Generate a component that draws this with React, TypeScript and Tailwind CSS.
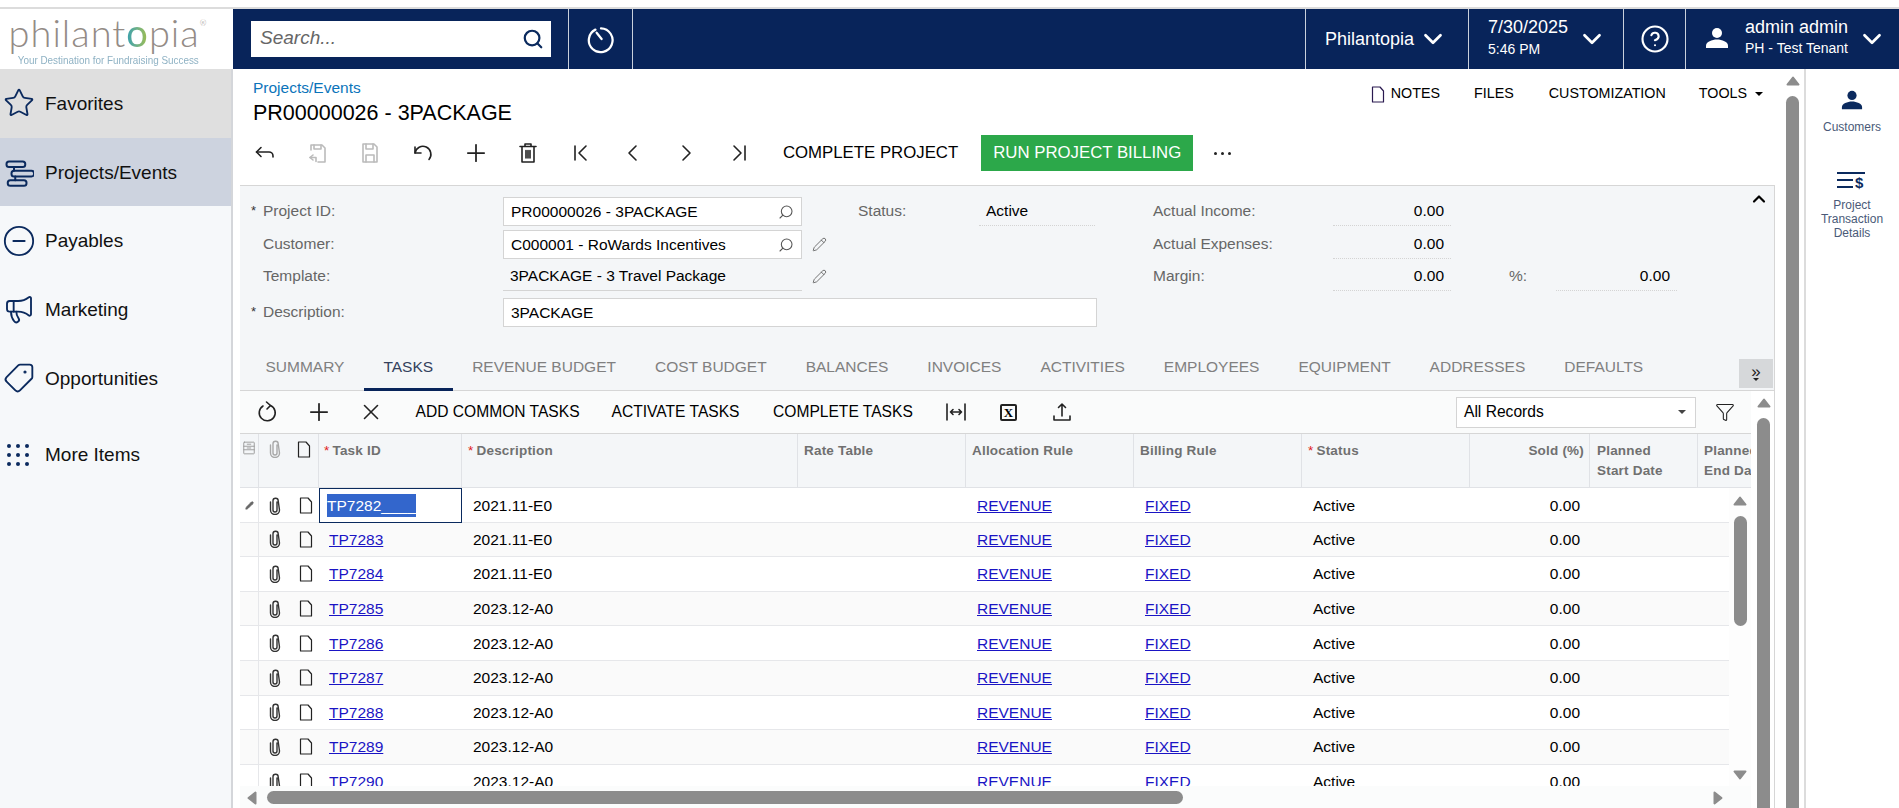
import React from 'react';
import { ChevronDown, ChevronUp, CircleHelp, CircleMinus, Funnel, Megaphone, Pencil, Plus, Search, Star, Tag, X } from 'lucide-react';

const columns = 'grid grid-cols-[19px_30px_30px_143px_336px_168px_168px_168px_168px_120px_108px_100px]';

const tasks = [
  ['TP7282', '2021.11-E0'],
  ['TP7283', '2021.11-E0'],
  ['TP7284', '2021.11-E0'],
  ['TP7285', '2023.12-A0'],
  ['TP7286', '2023.12-A0'],
  ['TP7287', '2023.12-A0'],
  ['TP7288', '2023.12-A0'],
  ['TP7289', '2023.12-A0'],
  ['TP7290', '2023.12-A0'],
];

const tabs = ['SUMMARY', 'TASKS', 'REVENUE BUDGET', 'COST BUDGET', 'BALANCES', 'INVOICES', 'ACTIVITIES', 'EMPLOYEES', 'EQUIPMENT', 'ADDRESSES', 'DEFAULTS'];

function Svg({ size = 24, className = '', children }: { size?: number; className?: string; children: React.ReactNode }) {
  return (
    <svg width={size} height={size} viewBox="0 0 24 24" fill="none" stroke="currentColor" strokeWidth="1.6" strokeLinecap="round" strokeLinejoin="round" className={className}>
      {children}
    </svg>
  );
}

function Triangle({ className = '' }: { className?: string }) {
  return (
    <svg width="14" height="10" viewBox="0 0 14 10" className={className}>
      <path d="M7 1.5 12.5 8.5H1.5Z" fill="#8c8c8c" stroke="#8c8c8c" strokeWidth="2" strokeLinejoin="round" />
    </svg>
  );
}

function Clip({ className = '' }: { className?: string }) {
  return (
    <svg width="12" height="18" viewBox="0 0 12 18" fill="none" stroke="currentColor" strokeWidth="1.4" strokeLinecap="round" className={className}>
      <path d="M8 5v8a2 2 0 0 1-4 0V4a2.6 2.6 0 0 1 5.2-.2L10.500 13a4.500 4.500 0 0 1-9 0V5" />
    </svg>
  );
}

function Doc({ className = '' }: { className?: string }) {
  return (
    <svg width="14" height="17" viewBox="0 0 14 17" fill="none" stroke="currentColor" strokeWidth="1.2" strokeLinejoin="round" className={className}>
      <path d="M1.500 1h7.500l3.500 4v11h-11Z" />
    </svg>
  );
}

function User({ size = 26, className = '' }: { size?: number; className?: string }) {
  return (
    <svg width={size} height={size} viewBox="0 0 24 24" fill="currentColor" className={className}>
      <circle cx="12" cy="7" r="5" />
      <path d="M1 22v-2.500c0-3.500 6-6 11-6s11 2.500 11 6V22Z" />
    </svg>
  );
}

function Field({ label, required, children }: { label: string; required?: boolean; children: React.ReactNode }) {
  return (
    <>
      <div className="flex w-[263px] items-center pb-[2px] pl-[11px] text-[15.5px] text-[#666]">
        <span className="w-[12px] text-[13px] text-[#333]">{required ? '*' : ''}</span>
        {label}
      </div>
      {children}
    </>
  );
}

function Lookup({ value, pencil }: { value: string; pencil?: boolean }) {
  return (
    <div className="flex w-[355px] items-center">
      <div className="flex h-[29px] w-[299px] items-center justify-between border border-[#d4d4d4] bg-white pr-[7px] pl-[7px] text-[15.5px] text-black">
        {value}
        <Search size={16} strokeWidth={1.6} className="-scale-x-100 text-[#555]" />
      </div>
      {pencil && <Pencil size={15} strokeWidth={1.3} className="ml-[10px] text-[#555]" />}
    </div>
  );
}

function Dotted({ width, right, children }: { width: string; right?: boolean; children: React.ReactNode }) {
  return (
    <div className={`${width} flex h-[29px] items-center border-b border-dotted border-[#d4d4d4] text-[15.5px] text-black ${right ? 'justify-end pr-[7px]' : 'pl-[7px]'}`}>
      {children}
    </div>
  );
}

function HeadCell({ children, star, right, pad = 'pl-[14px]' }: { children?: React.ReactNode; star?: boolean; right?: boolean; pad?: string }) {
  return (
    <div className={`h-[54px] border-r border-[#e0e2e6] pt-[7px] text-[13.5px] leading-[20px] font-bold tracking-[0.2px] text-[#707070] ${right ? 'pr-[5px] text-right' : pad}`}>
      {star && <span className="mr-[3px] font-normal text-[#e02020]">*</span>}
      {children}
    </div>
  );
}

function Row({ id, desc, index }: { id: string; desc: string; index: number }) {
  const link = 'text-[#1a14c4] underline';
  return (
    <div className={`${columns} h-[34.6px] items-center border-b border-[#e6e7ea] text-[15.5px] text-black ${index % 2 === 1 ? 'bg-[#fafafa]' : 'bg-white'}`}>
      <div className="flex h-full items-center justify-center border-r border-[#e6e7ea]">
        {index === 0 && <Pencil size={9} strokeWidth={2} fill="currentColor" className="text-[#666]" />}
      </div>
      <div className="flex items-center justify-center pl-[2px]"><Clip className="text-[#333]" /></div>
      <div className="flex items-center justify-center pl-[3px]"><Doc className="text-[#222]" /></div>
      {index === 0 ? (
        <div className="flex h-[35px] items-center border border-[#0a2a5e] pl-[7px]">
          <span className="bg-[#3366cc] text-white">TP7282____</span>
        </div>
      ) : (
        <div className="pl-[10px]"><span className={link}>{id}</span></div>
      )}
      <div className="pl-[11px]">{desc}</div>
      <div />
      <div className="pl-[11px]"><span className={link}>REVENUE</span></div>
      <div className="pl-[11px]"><span className={link}>FIXED</span></div>
      <div className="pl-[11px]">Active</div>
      <div className="pr-[10px] text-right">0.00</div>
      <div />
      <div />
    </div>
  );
}

function Sidebar() {
  const items = [
    { label: 'Favorites', bg: 'bg-[#dfdfdf]', icon: <Star size={32} strokeWidth={1.4} /> },
    {
      label: 'Projects/Events',
      bg: 'bg-[#cdd3df]',
      icon: (
        <Svg size={30}>
          <rect x="2" y="3.500" width="15" height="4.500" rx="2" />
          <rect x="6" y="11" width="18" height="4.500" rx="2" />
          <rect x="3" y="18.500" width="15" height="4.500" rx="2" />
          <path d="M8 8v3M9 15.500v3" />
        </Svg>
      ),
    },
    { label: 'Payables', bg: '', icon: <CircleMinus size={34} strokeWidth={1.3} /> },
    { label: 'Marketing', bg: '', icon: <Megaphone size={32} strokeWidth={1.4} /> },
    { label: 'Opportunities', bg: '', icon: <Tag size={32} strokeWidth={1.4} className="rotate-90" /> },
  ];
  return (
    <div className="flex w-[233px] shrink-0 flex-col border-r-2 border-[#d4d6da] bg-[#f6f8fa]">
      {items.map((item) => (
        <div key={item.label} className={`flex h-[68.700px] items-center ${item.bg}`}>
          <div className="flex w-[36px] justify-center pl-[1px] text-[#0b2a5e]">{item.icon}</div>
          <span className="ml-[9px] pt-[2px] text-[19px] text-[#111]">{item.label}</span>
        </div>
      ))}
      <div className="mt-[8px] flex h-[68.700px] items-center">
        <div className="flex w-[36px] justify-center text-[#0b2a5e]">
          <div className="grid grid-cols-3 gap-[5px]">
            {Array.from({ length: 9 }).map((_, i) => (
              <span key={i} className="h-[4px] w-[4px] rounded-full bg-[#0b2a5e]" />
            ))}
          </div>
        </div>
        <span className="ml-[9px] text-[19px] text-[#111]">More Items</span>
      </div>
    </div>
  );
}

function TopBar() {
  return (
    <div className="flex h-[60px] shrink-0">
      <div className="flex w-[233px] shrink-0 flex-col items-center bg-white pt-[4px] pr-[17px]">
        <div className="flex h-[38px] items-start font-['Lato',sans-serif] text-[38px] leading-[38px] font-light tracking-[1px] text-[#938b86]">
          philant
          <span className="bg-gradient-to-r from-[#2f9fb0] to-[#a4bf3c] bg-clip-text font-normal text-transparent">o</span>
          pia
          <span className="mt-[6px] text-[8px] leading-[8px]">®</span>
        </div>
        <div className="mt-[3px] scale-x-[0.86] text-[11.5px] leading-[13px] whitespace-nowrap text-[#8fb2c4]">Your Destination for Fundraising Success</div>
      </div>
      <div className="flex flex-1 items-stretch bg-[#08245a] text-white">
        <div className="flex w-[336px] items-center border-r border-[#c9d0dc] pl-[18px]">
          <div className="flex h-[36px] w-[300px] items-center justify-between bg-white pr-[7px] pb-[1px] pl-[9px] text-[19px] text-[#666] italic">
            Search...
            <Search size={22} strokeWidth={2.4} className="text-[#0b2a5e]" />
          </div>
        </div>
        <div className="flex w-[64px] items-center justify-center border-r border-[#c9d0dc]">
          <Svg size={30} className="stroke-[1.8]">
            <path d="M7.500 4.500A9.500 9.500 0 1 0 12 3.500" />
            <path d="M12.500 12 8.500 7" />
          </Svg>
        </div>
        <div className="flex-1" />
        <div className="flex w-[163px] shrink-0 items-center border-l border-[#c9d0dc] pl-[19px] text-[18px]">
          Philantopia
          <ChevronDown size={30} strokeWidth={2.2} className="ml-[4px]" />
        </div>
        <div className="flex w-[155px] shrink-0 items-center border-l border-[#c9d0dc] pl-[19px]">
          <div className="mb-[3px] flex flex-col">
            <span className="text-[18px] leading-[22px]">7/30/2025</span>
            <span className="mt-[1px] text-[14px] leading-[20px]">5:46 PM</span>
          </div>
          <ChevronDown size={30} strokeWidth={2.2} className="ml-[9px]" />
        </div>
        <div className="flex w-[63px] shrink-0 items-center justify-center border-x border-[#c9d0dc]">
          <CircleHelp size={30} strokeWidth={1.7} />
        </div>
        <div className="flex w-[213px] shrink-0 items-center pl-[19px]">
          <User size={24} className="mb-[2px]" />
          <div className="mb-[4px] ml-[16px] flex flex-col">
            <span className="text-[18px] leading-[22px]">admin admin</span>
            <span className="text-[14px] leading-[20px]">PH - Test Tenant</span>
          </div>
          <ChevronDown size={30} strokeWidth={2.2} className="ml-[9px]" />
        </div>
      </div>
    </div>
  );
}

function MainToolbar() {
  const icons = [
    <Svg key="back" className="text-[#222]"><path d="M8 6.500 3.500 11 8 15.500" /><path d="M3.500 11H16a4 4 0 0 1 4 4v1" /></Svg>,
    <Svg key="saveback" className="text-[#bbb]"><path d="M5 9V4h11l3 3v14h-7" /><path d="M8 4v4h7V4" /><path d="M7 14l-3 2.500L7 19" /><path d="M4 16.500h6v4" /></Svg>,
    <Svg key="save" className="text-[#bbb]"><path d="M5 3h11l3 3v15H5Z" /><path d="M8 3v5h7V3M8 21v-7h8v7" /></Svg>,
    <Svg key="undo" className="text-[#222]"><path d="M4 6v6h6" /><path d="M4 12a8 8 0 1 1 14 6.500" /></Svg>,
    <Plus key="plus" size={28} strokeWidth={1.5} className="text-[#222]" />,
    <Svg key="trash" className="text-[#222]"><path d="M4 5.500h16M9 5.500V3h6v2.500M6 5.500V21h12V5.500M10 9.500V17M12 9.500V17M14 9.500V17" /></Svg>,
    <Svg key="first" className="text-[#222]"><path d="M6 5v14M17 5l-7 7 7 7" /></Svg>,
    <Svg key="prev" className="text-[#222]"><path d="M15 5l-7 7 7 7" /></Svg>,
    <Svg key="next" className="text-[#222]"><path d="M9 5l7 7-7 7" /></Svg>,
    <Svg key="last" className="text-[#222]"><path d="M7 5l7 7-7 7M18 5v14" /></Svg>,
  ];
  return (
    <div className="flex h-[36px] items-center pl-[6px]">
      {icons.map((icon, i) => (
        <div key={i} className="flex w-[52.600px] justify-center">{icon}</div>
      ))}
      <span className="ml-[18px] text-[16.8px] text-black">COMPLETE PROJECT</span>
      <div className="ml-[23px] flex h-[36px] w-[212px] items-center justify-center bg-[#2ca84a] text-[16.8px] text-white">RUN PROJECT BILLING</div>
      <div className="ml-[21px] flex gap-[4px]">
        <span className="h-[3px] w-[3px] rounded-full bg-[#222]" />
        <span className="h-[3px] w-[3px] rounded-full bg-[#222]" />
        <span className="h-[3px] w-[3px] rounded-full bg-[#222]" />
      </div>
    </div>
  );
}

function FormArea() {
  const grey = 'pb-[2px] text-[15.5px] text-[#666]';
  return (
    <div className="pt-[9px]">
      <div className="flex h-[33px] items-center">
        <Field label="Project ID:" required><Lookup value="PR00000026 - 3PACKAGE" /></Field>
        <div className={`w-[121px] ${grey}`}>Status:</div>
        <Dotted width="w-[116px]">Active</Dotted>
        <div className={`ml-[58px] w-[180px] ${grey}`}>Actual Income:</div>
        <Dotted width="w-[118px]" right>0.00</Dotted>
        <ChevronUp size={20} strokeWidth={2.6} className="mb-[26px] ml-[298px] text-black" />
      </div>
      <div className="flex h-[33px] items-center">
        <Field label="Customer:"><Lookup value="C000001 - RoWards Incentives" pencil /></Field>
        <div className="w-[295px]" />
        <div className={`w-[180px] ${grey}`}>Actual Expenses:</div>
        <Dotted width="w-[118px]" right>0.00</Dotted>
      </div>
      <div className="flex h-[31px] items-center">
        <Field label="Template:">
          <div className="flex w-[355px] items-center">
            <div className="flex h-[29px] w-[299px] items-center border-b border-[#d4d4d4] pl-[7px] text-[15.5px] text-black">3PACKAGE - 3 Travel Package</div>
            <Pencil size={15} strokeWidth={1.3} className="ml-[10px] text-[#555]" />
          </div>
        </Field>
        <div className="w-[295px]" />
        <div className={`w-[180px] ${grey}`}>Margin:</div>
        <Dotted width="w-[118px]" right>0.00</Dotted>
        <div className={`ml-[58px] w-[47px] ${grey}`}>%:</div>
        <Dotted width="w-[121px]" right>0.00</Dotted>
      </div>
      <div className="mt-[4px] flex h-[33px] items-center">
        <Field label="Description:" required>
          <div className="flex h-[29px] w-[594px] items-center border border-[#d4d4d4] bg-white pl-[7px] text-[15.5px] text-black">3PACKAGE</div>
        </Field>
      </div>
    </div>
  );
}

function TabBar() {
  return (
    <div className="mt-[17px] flex h-[45px] border-b border-[#d6d6d6] pl-[6px]">
      {tabs.map((tab) => (
        <div
          key={tab}
          className={`flex h-[45px] items-start px-[19.500px] pt-[11px] text-[15.5px] leading-[20px] ${tab === 'TASKS' ? 'border-b-3 border-[#08245a] text-[#33415c]' : 'text-[#808080]'}`}
        >
          {tab}
        </div>
      ))}
      <div className="mt-[13px] mr-[1px] ml-auto flex h-[29px] w-[34px] flex-col items-center justify-center bg-[#d6d8da] text-[#222]">
        <span className="text-[17px] leading-[12px]">»</span>
        <span className="h-0 w-0 border-x-[3px] border-t-[3px] border-x-transparent border-t-[#222]" />
      </div>
    </div>
  );
}

function GridToolbar() {
  return (
    <div className="flex h-[43px] items-center border-b border-[#d6d6d6] bg-[#fafbfb] pl-[1px] text-[15.6px] text-black">
      <div className="flex w-[52px] justify-center">
        <Svg className="text-[#222]"><path d="M8 6a8 8 0 1 0 7.500-.5" /><path d="M11.500 2 15.500 5.500 12 9" /></Svg>
      </div>
      <div className="flex w-[52px] justify-center"><Plus size={28} strokeWidth={1.5} className="text-[#222]" /></div>
      <div className="flex w-[52px] justify-center"><X size={26} strokeWidth={1.5} className="text-[#222]" /></div>
      <span className="ml-[18.500px]">ADD COMMON TASKS</span>
      <span className="ml-[32px]">ACTIVATE TASKS</span>
      <span className="ml-[33.500px]">COMPLETE TASKS</span>
      <div className="ml-[31px] flex w-[24px] justify-center">
        <Svg className="text-[#222]"><path d="M3 4v16M21 4v16M6.500 12h11M9 9.500 6.500 12 9 14.500M15 9.500l2.500 2.500-2.500 2.500" /></Svg>
      </div>
      <div className="ml-[32px] flex h-[17px] w-[17px] items-center justify-center rounded-[2px] border-2 border-[#222] font-['Liberation_Serif',serif] text-[13px] leading-none font-bold text-black">X</div>
      <div className="ml-[33px] flex w-[24px] justify-center">
        <Svg className="text-[#222]"><path d="M12 16V4M8.500 7.500 12 4l3.500 3.500M4 16v4h16v-4" /></Svg>
      </div>
      <div className="ml-auto flex h-[31px] w-[240px] items-center justify-between border border-[#d4d4d4] bg-white pr-[9px] pl-[7px]">
        All Records
        <span className="h-0 w-0 border-x-[4px] border-t-[4px] border-x-transparent border-t-[#444]" />
      </div>
      <div className="mr-[14px] ml-[17px] flex w-[24px] justify-center">
        <Funnel size={20} strokeWidth={1.3} className="text-[#222]" />
      </div>
    </div>
  );
}

function Grid() {
  return (
    <div className="flex min-w-0 flex-1 flex-col overflow-hidden">
      <GridToolbar />
      <div className={`${columns} h-[54px] border-b border-[#e0e2e6] bg-[#f4f6f8]`}>
        <div className="flex h-[54px] justify-center border-r border-[#e0e2e6] pt-[7px] text-[#9a9a9a]">
          <Svg size={14}><rect x="3" y="2" width="18" height="20" rx="1" /><path d="M3 9h18M3 15h18M9 5.500h6M9 12h6" /></Svg>
        </div>
        <div className="flex h-[54px] justify-center pt-[6px] pl-[1px] text-[#a8a8a8]"><Clip /></div>
        <div className="flex h-[54px] justify-center border-r border-[#e0e2e6] pt-[7px] pl-[1px] text-[#222]"><Doc /></div>
        <HeadCell star pad="pl-[5px]">Task ID</HeadCell>
        <HeadCell star pad="pl-[6px]">Description</HeadCell>
        <HeadCell pad="pl-[6px]">Rate Table</HeadCell>
        <HeadCell pad="pl-[6px]">Allocation Rule</HeadCell>
        <HeadCell pad="pl-[6px]">Billing Rule</HeadCell>
        <HeadCell star pad="pl-[6px]">Status</HeadCell>
        <HeadCell right>Sold (%)</HeadCell>
        <HeadCell pad="pl-[7px]">Planned<br />Start Date</HeadCell>
        <div className="h-[54px] whitespace-nowrap pt-[7px] pl-[6px] text-[13.5px] leading-[20px] font-bold tracking-[0.2px] text-[#707070]">Planned<br />End Date</div>
      </div>
      <div className="flex h-[298px] shrink-0">
        <div className="w-[1489px] shrink-0 overflow-hidden bg-white">
          {tasks.map((t, i) => (
            <Row key={t[0]} id={t[0]} desc={t[1]} index={i} />
          ))}
        </div>
        <div className="flex flex-1 flex-col items-center bg-[#fdfdfd] pt-[8px] pb-[6px]">
          <Triangle />
          <div className="mt-[10px] h-[110px] w-[13px] rounded-[7px] bg-[#8c8c8c]" />
          <div className="flex-1" />
          <Triangle className="rotate-180" />
        </div>
      </div>
      <div className="flex flex-1 items-start bg-[#fbfcfc] pt-[5px] pl-[5px]">
        <Triangle className="mt-[2px] -rotate-90" />
        <div className="ml-[8px] h-[13px] w-[916px] rounded-[7px] bg-[#8c8c8c]" />
        <Triangle className="mt-[2px] ml-[528px] rotate-90" />
      </div>
    </div>
  );
}

function RightPanel() {
  return (
    <div className="flex w-[94px] shrink-0 flex-col items-center border-l-2 border-[#dcdcdc] bg-white text-center text-[12px] leading-[14px] text-[#4a5a78]">
      <User size={22} className="mt-[20px] text-[#0b2a5e]" />
      <span className="mt-[9px]">Customers</span>
      <div className="mt-[35px] flex h-[22px] w-[30px] items-center text-[#0b2a5e]">
        <div className="flex flex-col gap-[5px]">
          <span className="h-[2px] w-[28px] bg-[#0b2a5e]" />
          <span className="h-[2px] w-[16px] bg-[#0b2a5e]" />
          <span className="h-[2px] w-[16px] bg-[#0b2a5e]" />
        </div>
        <span className="-ml-[10px] mt-[6px] text-[15px] font-bold">$</span>
      </div>
      <span className="mt-[7px]">Project<br />Transaction<br />Details</span>
    </div>
  );
}

export default function App() {
  return (
    <div className="flex h-[808px] w-[1899px] flex-col overflow-hidden bg-white font-['Liberation_Sans',Arial,sans-serif]">
      <div className="h-[9px] shrink-0 border-b-2 border-[#dcdcdc] bg-white" />
      <TopBar />
      <div className="flex min-h-0 flex-1">
        <Sidebar />
        <div className="flex min-w-0 flex-1">
          <div className="flex w-[1553px] shrink-0 flex-col">
            <div className="flex h-[66px] shrink-0 justify-between">
              <div className="pt-[10px] pl-[20px]">
                <div className="text-[15.5px] leading-[18px] text-[#0b74ba]">Projects/Events</div>
                <div className="mt-[2px] text-[21.500px] leading-[28px] text-black">PR00000026 - 3PACKAGE</div>
              </div>
              <div className="mt-[15px] flex h-[20px] items-center pr-[23px] text-[14.300px] text-black">
                <Doc className="mr-[6px] text-[#2a1a50]" />
                NOTES
                <span className="ml-[34px]">FILES</span>
                <span className="ml-[35px]">CUSTOMIZATION</span>
                <span className="ml-[33px]">TOOLS</span>
                <span className="ml-[8px] h-0 w-0 border-x-[4px] border-t-[4px] border-x-transparent border-t-black" />
              </div>
            </div>
            <MainToolbar />
            <div className="mt-[14px] mr-[11px] ml-[7px] flex min-h-0 flex-1 flex-col border-t border-r border-[#d6d6d6] bg-[#f4f6f8]">
              <FormArea />
              <TabBar />
              <div className="flex min-h-0 flex-1">
                <Grid />
                <div className="flex w-[23px] shrink-0 flex-col items-center bg-white pt-[7px] pl-[2px]">
                  <Triangle />
                  <div className="mt-[10px] w-[13px] flex-1 rounded-t-[7px] bg-[#8c8c8c]" />
                </div>
              </div>
            </div>
          </div>
          <div className="flex w-[18px] shrink-0 flex-col pt-[7px]">
            <Triangle />
            <div className="mt-[10px] w-[13px] flex-1 rounded-t-[7px] bg-[#8c8c8c]" />
          </div>
          <RightPanel />
        </div>
      </div>
    </div>
  );
}
